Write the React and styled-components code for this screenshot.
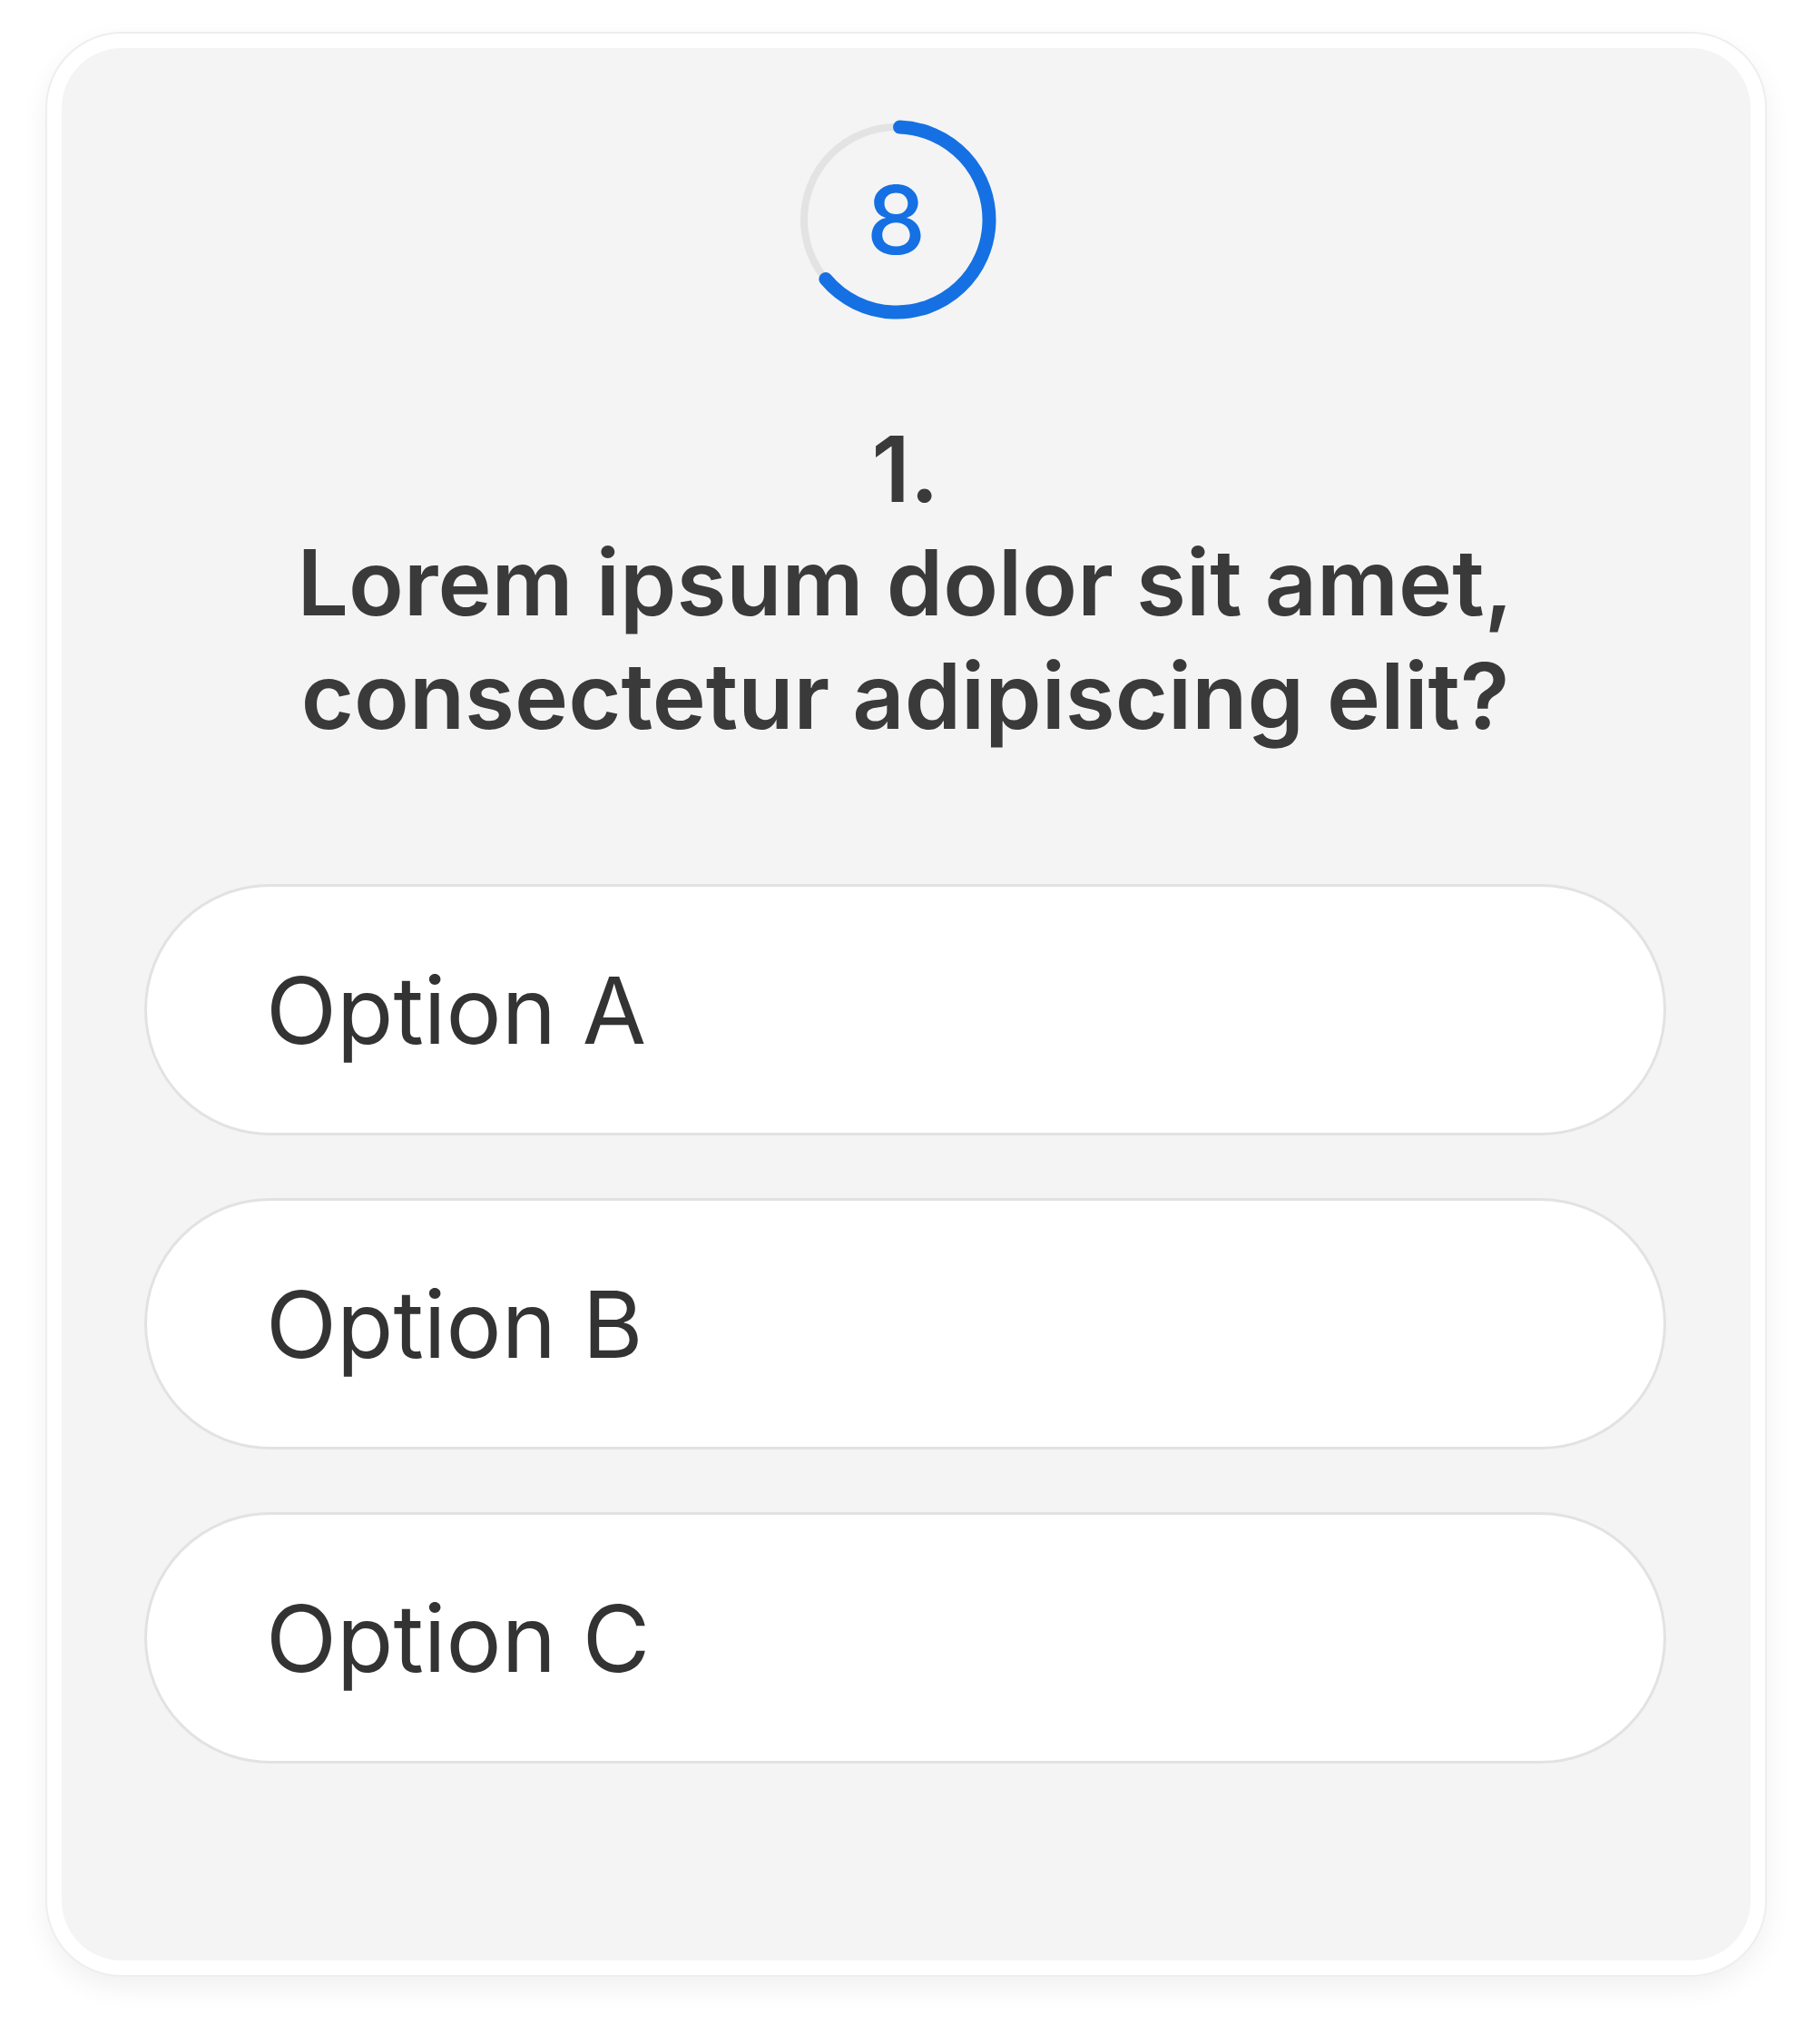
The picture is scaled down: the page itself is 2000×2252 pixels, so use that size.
import React from 'react';
import styled, { createGlobalStyle } from 'styled-components';

const GlobalStyle = createGlobalStyle`
  html, body {
    margin: 0;
    padding: 0;
    background: #ffffff;
    font-family: Inter, "Noto Sans", "Liberation Sans", sans-serif;
  }
`;

const options = ['Option A', 'Option B', 'Option C'];

const Timer = ({ value, total }) => {
  const r = 102;
  const c = 2 * Math.PI * r;
  const done = (value / total) * c;
  return (
    <TimerBox>
      <svg width="220" height="220" viewBox="0 0 220 220">
        <circle cx="110" cy="110" r={r} fill="none" stroke="#e3e3e3" strokeWidth="8" />
        <circle
          cx="110"
          cy="110"
          r={r}
          fill="none"
          stroke="#1570e4"
          strokeWidth="15"
          strokeLinecap="round"
          strokeDasharray={`${done - 22} ${c}`}
          transform="rotate(-88 110 110)"
        />
      </svg>
      <TimerValue>{value}</TimerValue>
    </TimerBox>
  );
};

const App = () => {
  return (
    <Page>
      <GlobalStyle />
      <Card>
        <Inner>
          <Timer value={8} total={12} />
          <Question>
            <Number>1.</Number>
            Lorem ipsum dolor sit amet, consectetur adipiscing elit?
          </Question>
          <OptionList>
            {options.map(o => (
              <OptionButton key={o}>{o}</OptionButton>
            ))}
          </OptionList>
        </Inner>
      </Card>
    </Page>
  );
};

export default App;

const Page = styled.div`
  padding: 35px 53px 70px 50px;
`;

const Card = styled.div`
  background: #ffffff;
  border: 2px solid #eeeeee;
  border-radius: 84px;
  padding: 16px;
  box-shadow: 0 12px 30px rgba(0, 0, 0, 0.06);
`;

const Inner = styled.div`
  background: #f4f4f4;
  border-radius: 66px;
  padding: 79px 93px 217px 91px;
  display: flex;
  flex-direction: column;
  align-items: center;
`;

const TimerBox = styled.div`
  position: relative;
  width: 220px;
  height: 220px;
  margin-right: 20px;
`;

const TimerValue = styled.span`
  position: absolute;
  inset: 0;
  display: flex;
  align-items: center;
  justify-content: center;
  font-size: 104px;
  font-weight: 500;
  color: #1570e4;
`;

const Question = styled.h2`
  margin: 102px 0 0;
  font-size: 100px;
  line-height: 125px;
  font-weight: 600;
  color: #3a3a3a;
  text-align: center;
  max-width: 1500px;
`;

const Number = styled.span`
  display: block;
`;

const OptionList = styled.div`
  align-self: stretch;
  display: flex;
  flex-direction: column;
  gap: 69px;
  margin-top: 145px;
`;

const OptionButton = styled.button`
  height: 277px;
  border: 3px solid #e2e2e2;
  border-radius: 140px;
  background: #ffffff;
  padding: 0 0 0 131px;
  text-align: left;
  font-family: inherit;
  font-size: 102px;
  font-weight: 400;
  color: #333333;
`;
